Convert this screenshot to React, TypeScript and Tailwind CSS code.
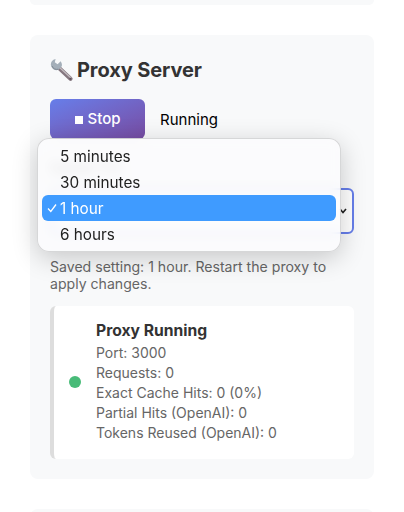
import React from 'react';

const font = { fontFamily: 'Inter, "Liberation Sans", sans-serif' };

const Wrench: React.FC = () => (
  <svg width="24" height="24" viewBox="0 0 24 24" className="shrink-0">
    <path d="M8 9 L20.5 20.8" stroke="#85777f" strokeWidth="4.2" strokeLinecap="round" />
    <path d="M8.5 8.5 L20.8 19.8" stroke="#c2bcc0" strokeWidth="1.3" strokeLinecap="round" />
    <circle cx="20.4" cy="20.8" r="1" fill="#5f5158" />
    <path d="M5.6 1 A5.4 5.4 0 0 0 1 7.6 A5.6 5.6 0 0 0 8.4 11.8 L11.6 8.6 A5.6 5.6 0 0 0 10.6 3.2 L7.6 6.2 L4.8 4.2 Z" fill="#a4afb9" />
    <path d="M2 8 A5 5 0 0 0 8.2 11.2" fill="none" stroke="#7d8791" strokeWidth="1" />
  </svg>
);

const App: React.FC = () => {
  return (
    <div className="w-[404px] h-[512px] overflow-hidden bg-white" style={font}>
      <div className="mx-[30px] h-[5px] bg-[#f8f9fa] rounded-b-lg" />

      <div className="relative mx-[30px] mt-[30px] h-[444px] bg-[#f8f9fa] rounded-lg p-5">
        <h2 className="flex items-center gap-[3px] h-[30px] text-[20px] tracking-[-0.1px] font-bold text-[#333]">
          <Wrench /> Proxy Server
        </h2>

        <div className="flex items-center gap-[15px] mt-[14px]">
          <button className="flex items-center justify-center gap-[5px] w-[95px] h-10 pt-[1px] rounded-md bg-gradient-to-br from-[#667eea] to-[#764ba2] text-white text-[15px] font-medium">
            <span className="w-2 h-2 bg-white" />
            Stop
          </button>
          <span className="pt-[2px] text-[15px] text-black">Running</span>
        </div>

        <label className="block mt-[18px] text-[14px] font-medium text-[#555]">Cache TTL</label>

        <div className="mt-[10px] flex items-center justify-end h-[46px] rounded-md border-2 border-[#667eea] bg-white pr-[5px]">
          <svg width="8" height="6" viewBox="0 0 8 6">
            <path d="M1 1 L4 4.5 L7 1" fill="none" stroke="#222" strokeWidth="1.6" />
          </svg>
        </div>

        <p className="mt-[24px] max-w-[285px] text-[14.1px] leading-[17px] text-[#666]">
          Saved setting: 1 hour. Restart the proxy to apply changes.
        </p>

        <div className="flex items-center mt-[14px] h-[153px] pb-[2px] rounded-md border-l-4 border-[#ddd] bg-white pl-[15px]">
          <span className="w-3 h-3 rounded-full bg-[#48bb78]" />
          <div className="ml-[15px]">
            <div className="text-[15.7px] font-bold leading-[20px] mb-[2px] text-[#333]">Proxy Running</div>
            <div className="text-[14px] leading-[20px] text-[#666]">
              <div>Port: 3000</div>
              <div>Requests: 0</div>
              <div>Exact Cache Hits: 0 (0%)</div>
              <div>Partial Hits (OpenAI): 0</div>
              <div>Tokens Reused (OpenAI): 0</div>
            </div>
          </div>
        </div>

        {/* native select menu, open over the form */}
        <div className="absolute left-[7px] top-[103px] w-[304px] h-[114px] rounded-xl border border-black/15 bg-[#fbfbfd]/85 backdrop-blur-[6px] shadow-[0_6px_26px_rgba(0,0,0,0.2)] px-[4px] py-[4px] text-[15.3px] text-[#222]">
          <div className="h-[26px] leading-[28px] pl-[18px]">5 minutes</div>
          <div className="h-[26px] leading-[28px] pl-[18px]">30 minutes</div>
          <div className="relative h-[26px] leading-[28px] pl-[18px] rounded-md bg-[#3f9bff] text-white">
            <svg className="absolute left-[5px] top-[8px]" width="10" height="10" viewBox="0 0 10 10">
              <path d="M1 5.5 L3.8 8.5 L9 1.5" fill="none" stroke="white" strokeWidth="1.3" />
            </svg>
            1 hour
          </div>
          <div className="h-[26px] leading-[28px] pl-[18px]">6 hours</div>
        </div>
      </div>

      <div className="mx-[30px] mt-[30px] h-[10px] bg-[#f8f9fa] rounded-t-lg" />
    </div>
  );
};

export default App;
